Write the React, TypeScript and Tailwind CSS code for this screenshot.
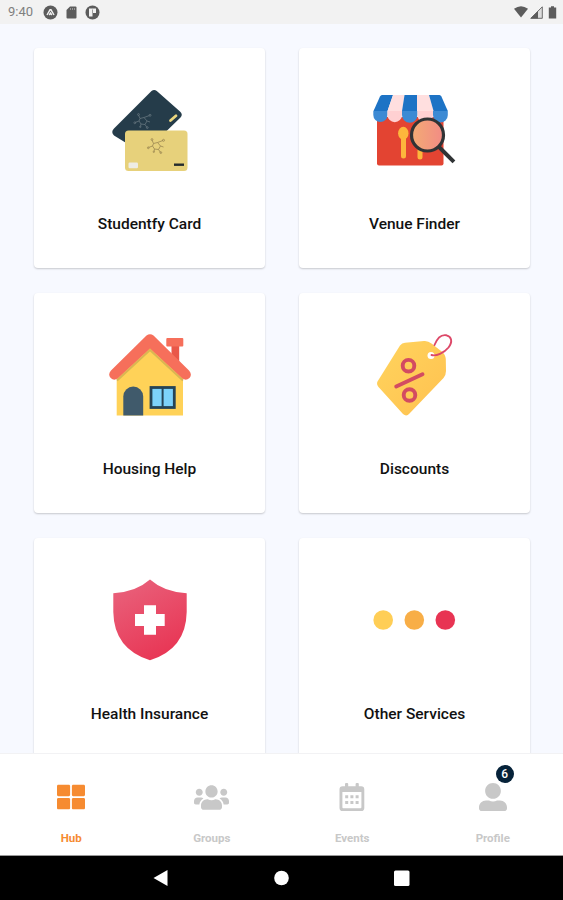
import React from "react";
import { FaThLarge, FaUserAlt, FaUsers } from "react-icons/fa";

const art = "block w-[110px] h-[100px] overflow-visible";

function Molecule({ color }: { color: string }) {
  return (
    <g stroke={color} fill="none" strokeWidth="0.8">
      <path d="M-3 -2.5 L1 -3.5 L4 0 L2 3.5 L-2 3 L-4 0Z" />
      <path d="M-3 -2.5L-4.5 -6M1 -3.5L6.5 -5.5M4 0L7 1M2 3.5L4 6.5M-2 3L-2.5 5.5M-4 0L-8 1.5" />
      <circle cx="-4.5" cy="-6.5" r="0.9" />
      <circle cx="7" cy="-5.7" r="1" />
      <circle cx="4.3" cy="6.6" r="0.9" />
      <circle cx="-8.2" cy="1.8" r="0.9" />
      <circle cx="-2.7" cy="5.8" r="0.7" />
    </g>
  );
}

function CardArt() {
  return (
    <svg className={art} viewBox="0 0 110 100">
      <path
        d="M56.5 11Q59.2 8.8 61.8 11L85 31.5Q88.3 34.5 85.5 37.5L51 71Q48 74 45 71.5L19 55.5Q15.5 52 19 48.5Z"
        fill="#253c4a"
      />
      <g transform="translate(48 41)">
        <Molecule color="#65757d" />
      </g>
      <path d="M75.5 40.5L81 35.8" stroke="#ecd77e" strokeWidth="2.8" strokeLinecap="round" />
      <rect x="30" y="50.5" width="62.5" height="40.5" rx="3.5" fill="#e7d17b" />
      <g transform="translate(61.5 66)">
        <Molecule color="#9b8750" />
      </g>
      <rect x="33.5" y="82.5" width="9.5" height="5.8" rx="1.2" fill="#eeece4" />
      <rect x="79" y="83.5" width="10" height="2.4" fill="#242b2d" />
    </svg>
  );
}

function VenueArt() {
  return (
    <svg className={art} viewBox="0 0 110 100">
      <defs>
        <linearGradient id="lens" x2="1" y2="0">
          <stop stopColor="#f3ab74" />
          <stop offset="1" stopColor="#f28b85" />
        </linearGradient>
      </defs>
      <path d="M17 37H83.5V83.5Q83.5 85.5 81.5 85.5H19Q17 85.5 17 83.5Z" fill="#e34432" />
      <path d="M22 15H33L27.5 31H13.5L20 16.5Q20.8 15 22 15Z" fill="#1d73c5" />
      <path d="M33 15H44.5L42 31H27.5Z" fill="#ffdfdf" />
      <path d="M44.5 15H57V31H42Z" fill="#1d73c5" />
      <path d="M57 15H69L73.5 31H57Z" fill="#ffdfdf" />
      <path d="M69 15H79.5Q80.7 15 81.4 16.5L87.8 31H73.5Z" fill="#1d73c5" />
      <path d="M13.3 31H27.5V35A7.1 7.1 0 0 1 13.3 35Z" fill="#3c8ad4" />
      <path d="M27.5 31H42V35A7.25 7.25 0 0 1 27.5 35Z" fill="#ffd0d2" />
      <path d="M42 31H57.5V35A7.75 7.75 0 0 1 42 35Z" fill="#3c8ad4" />
      <path d="M57.5 31H73V35A7.75 7.75 0 0 1 57.5 35Z" fill="#ffd0d2" />
      <path d="M73 31H87.8V35A7.4 7.4 0 0 1 73 35Z" fill="#3c8ad4" />
      <ellipse cx="43.3" cy="53.2" rx="5.2" ry="6.4" fill="#fdb63c" />
      <path d="M43.5 56V76M60 70V77" stroke="#fdb63c" strokeWidth="5" strokeLinecap="round" />
      <path d="M79 67L92.5 80.5" stroke="#303335" strokeWidth="4" strokeLinecap="square" />
      <circle cx="67.5" cy="55" r="16" fill="url(#lens)" stroke="#303335" strokeWidth="3.2" />
    </svg>
  );
}

function HouseArt() {
  return (
    <svg className={art} viewBox="0 0 110 100">
      <path d="M76.5 20H84.2V38L76.5 30Z" fill="#e95749" />
      <rect x="71.3" y="13" width="17" height="8.5" rx="1" fill="#f66f5b" />
      <path d="M21.7 49L55 19L88 49V90.5H21.7Z" fill="#ffd258" />
      <path d="M22 55.5L55 25L88 55.5" fill="none" stroke="#d9b653" strokeWidth="2" />
      <path
        d="M51.5 10.5Q55 8 58.5 10.5L94 45.5Q97.5 49.5 94.5 53Q91 56 87.5 53.5L55 23.5L22.5 53.5Q19 56 15.7 53Q12.5 49.5 16 45.5Z"
        fill="#f66f5b"
      />
      <path d="M28.3 90.5V71.5A9.9 9.9 0 0 1 48.2 71.5V90.5Z" fill="#405a6b" />
      <rect x="56" y="62.5" width="23.3" height="20" fill="#7cd2fa" stroke="#254457" strokeWidth="2.8" />
      <path d="M67.6 62V83" stroke="#254457" strokeWidth="2" />
    </svg>
  );
}

function TagArt() {
  return (
    <svg className={art} viewBox="0 0 110 100">
      <defs>
        <linearGradient id="tag" x1="0" y1="0" x2="1" y2="1">
          <stop stopColor="#ffd45d" />
          <stop offset="1" stopColor="#ffc150" />
        </linearGradient>
      </defs>
      <path
        d="M40 20.5Q42 18 45 17.7L64 16Q68 15.6 71.5 18.5L82 26.8Q85.5 29.8 85.8 34L86 46Q86 50 83.5 53L49.5 88.5Q46.5 92 43 89L18.5 62Q16.2 59 17.5 56.5Z"
        fill="url(#tag)"
      />
      <circle cx="71" cy="30.5" r="3.5" fill="#fff" />
      <path d="M71.5 30C76 31.5 84 28 88.5 22.5C93 16.5 91.5 11.5 86.5 10.3C80 9 76.5 15 74.5 20" fill="none" stroke="#dd4868" strokeWidth="1.9" strokeLinecap="round" />
      <g fill="none" stroke="#d34b61" strokeWidth="3.9">
        <circle cx="48.5" cy="40.7" r="5.8" />
        <circle cx="49.5" cy="70" r="5.8" />
        <path d="M36.2 61.5L62.5 49.3" strokeLinecap="round" />
      </g>
    </svg>
  );
}

function ShieldArt() {
  return (
    <svg className={art} viewBox="0 0 110 100">
      <defs>
        <linearGradient id="shield" x1="0.2" y1="0" x2="0.7" y2="1">
          <stop stopColor="#e9617b" />
          <stop offset="1" stopColor="#e83453" />
        </linearGradient>
      </defs>
      <path d="M55 9.5Q69 22 91.7 23.2V42Q91 79 55 90.3Q19 79 18.3 42V23.2Q41 22 55 9.5Z" fill="url(#shield)" />
      <path d="M49 35.3H61V44H69.7V56H61V64.7H49V56H40V44H49Z" fill="#fff" />
    </svg>
  );
}

function DotsArt() {
  return (
    <svg className={art} viewBox="0 0 110 100">
      <circle cx="23.2" cy="50" r="9.8" fill="#ffce56" />
      <circle cx="54.3" cy="50" r="9.8" fill="#f8ae47" />
      <circle cx="85.3" cy="50" r="9.8" fill="#e83453" />
    </svg>
  );
}

function CalendarIcon({ size }: { size: number }) {
  return (
    <svg width={size} height={size} viewBox="0 0 28 28" fill="currentColor">
      <rect x="7" y="0" width="3.2" height="6" rx="1" />
      <rect x="17.6" y="0" width="3.2" height="6" rx="1" />
      <path
        fillRule="evenodd"
        d="M4.6 3.3H23.2Q26.3 3.3 26.3 6.4V24.9Q26.3 28 23.2 28H4.6Q1.5 28 1.5 24.9V6.4Q1.5 3.3 4.6 3.3ZM4.4 9V24.3Q4.4 25.2 5.3 25.2H22.5Q23.4 25.2 23.4 24.3V9Z"
      />
      <path d="M7.2 12.3h3v3h-3zM12.4 12.3h3v3h-3zM17.6 12.3h3v3h-3zM7.2 17.9h3v3h-3zM12.4 17.9h3v3h-3zM17.6 17.9h3v3h-3z" />
    </svg>
  );
}

const services = [
  { title: "Studentfy Card", Art: CardArt },
  { title: "Venue Finder", Art: VenueArt },
  { title: "Housing Help", Art: HouseArt },
  { title: "Discounts", Art: TagArt },
  { title: "Health Insurance", Art: ShieldArt },
  { title: "Other Services", Art: DotsArt },
];

const tabs = [
  { title: "Hub", Icon: FaThLarge, size: 28, badge: 0, color: "text-[#f68b31]" },
  { title: "Groups", Icon: FaUsers, size: 35, badge: 0, color: "text-[#c8c8c8]" },
  { title: "Events", Icon: CalendarIcon, size: 28, badge: 0, color: "text-[#c8c8c8]" },
  { title: "Profile", Icon: FaUserAlt, size: 28, badge: 6, color: "text-[#c8c8c8]" },
];

function StatusBar() {
  return (
    <header className="h-6 shrink-0 bg-[#f2f2f2] flex items-center justify-between pl-2 pr-1.5 text-[#5c5c5c]">
      <div className="flex items-center">
        <span className="w-[35px] text-[13px] leading-6 text-[#808080]">9:40</span>
        <svg className="w-[15px] h-[15px]" viewBox="0 0 15 15">
          <circle cx="7.5" cy="7.5" r="7" fill="currentColor" />
          <path d="M4 10L7 4.8H8L11 10M6.2 10L7.5 8L8.8 10" fill="none" stroke="#f2f2f2" strokeWidth="1.4" />
        </svg>
        <svg className="ml-2 w-[11px] h-[13px]" viewBox="0 0 11 13">
          <path d="M4 0.5H9.5Q10.5 0.5 10.5 1.5V11.5Q10.5 12.5 9.5 12.5H1.5Q0.5 12.5 0.5 11.5V4Z" fill="currentColor" />
          <path d="M4.5 2V4M6.5 2V4M8.5 2V4" stroke="#a5a5a5" strokeWidth="0.8" />
        </svg>
        <svg className="ml-2 w-[15px] h-[15px]" viewBox="0 0 15 15">
          <circle cx="7.5" cy="7.5" r="7" fill="currentColor" />
          <path d="M4 3.5H11V8H7.5V11.5H4Z" fill="#f2f2f2" />
          <path d="M7.5 4.5V8" stroke="#888" strokeWidth="0.8" />
        </svg>
      </div>
      <div className="flex items-center">
        <svg className="w-[14px] h-[12px]" viewBox="0 0 14 12">
          <path d="M0 2.8Q7 -2.2 14 2.8L7 11.5Z" fill="currentColor" />
        </svg>
        <svg className="ml-0.5 w-[13px] h-[13px]" viewBox="0 0 13 13">
          <path d="M0.8 12.3L12.3 0.8V12.3Z" fill="#ddd" stroke="currentColor" strokeWidth="0.9" />
          <path d="M0.5 12.5L8 5V12.5Z" fill="currentColor" />
        </svg>
        <svg className="ml-[5px] w-[9px] h-[13px]" viewBox="0 0 9 13">
          <path d="M3 0.3H6V1.5H8.2V12.5H0.8V1.5H3Z" fill="currentColor" />
        </svg>
      </div>
    </header>
  );
}

export default function App() {
  return (
    <div className="w-[563px] h-[900px] flex flex-col overflow-hidden bg-[#f7f9ff] font-['Roboto',sans-serif]">
      <StatusBar />
      <main className="flex-1 min-h-0 overflow-hidden pt-6 pl-[34px]">
        <div className="grid grid-cols-[231px_231px] gap-x-[34px] gap-y-[25px]">
          {services.map(({ title, Art }) => (
            <section key={title} className="h-[220px] pt-8 flex flex-col items-center bg-white rounded-[4px] shadow-[0_1px_2px_rgba(0,0,0,0.2)]">
              <Art />
              <h2 className="mt-[34px] text-[15.5px] leading-5 font-medium text-[#111] whitespace-nowrap">{title}</h2>
            </section>
          ))}
        </div>
      </main>
      <nav className="h-[103px] shrink-0 grid grid-cols-4 pl-px bg-white border-t border-t-[#f2f2f4] border-b border-b-[#999]">
        {tabs.map(({ title, Icon, size, badge, color }) => (
          <div key={title} className={`flex flex-col items-center pt-[25px] ${color}`}>
            <div className="relative h-9 flex items-center justify-center">
              <Icon size={size} />
              {badge > 0 && (
                <span className="absolute -top-[14px] left-[17px] w-[18px] h-[18px] rounded-full bg-[#062239] text-white text-xs leading-[18px] font-medium text-center">
                  {badge}
                </span>
              )}
            </div>
            <span className="mt-[15px] text-[11.5px] leading-4 font-bold">{title}</span>
          </div>
        ))}
      </nav>
      <footer className="h-11 shrink-0 bg-black">
        <svg className="block w-full h-11" viewBox="0 0 563 44" fill="#fff">
          <path d="M153.5 22L167.5 14V30Z" />
          <circle cx="281.5" cy="22" r="7.3" />
          <rect x="394" y="14.5" width="15.5" height="15.5" rx="1.5" />
        </svg>
      </footer>
    </div>
  );
}
